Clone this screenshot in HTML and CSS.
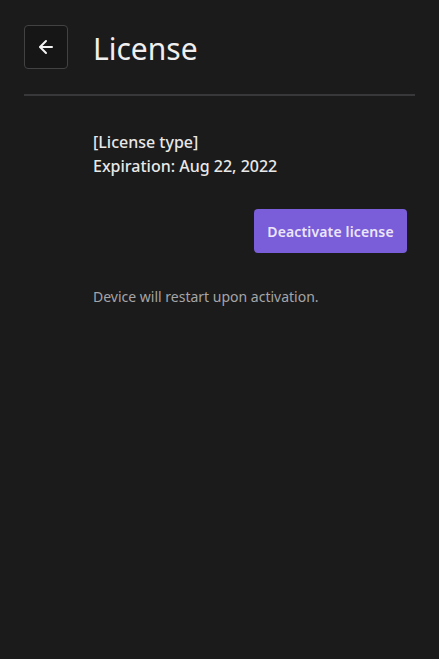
FILE: index.html
```html
<!DOCTYPE html>
<html lang="en">
<head>
<meta charset="utf-8">
<title>License</title>
<link rel="stylesheet" href="styles.css">
</head>
<body>
<div class="page">
  <header class="header">
    <button class="back" aria-label="Back">
      <svg width="18" height="18" viewBox="0 0 18 18" fill="none" stroke="#f2f2f2" stroke-width="2" stroke-linecap="round" stroke-linejoin="round">
        <path d="M15 9H3.5"/>
        <path d="M9 3L3 9L9 15"/>
      </svg>
    </button>
    <h1 class="title">License</h1>
  </header>
  <div class="divider"></div>
  <section class="content">
    <div class="info">
      <div class="info-line">[License type]</div>
      <div class="info-line">Expiration: Aug 22, 2022</div>
    </div>
    <div class="actions">
      <button class="primary">Deactivate license</button>
    </div>
    <p class="note">Device will restart upon activation.</p>
  </section>
</div>
</body>
</html>
```
FILE: styles.css
```css
html, body {
  margin: 0;
  padding: 0;
  background: #1b1b1c;
  height: 100%;
}
body {
  font-family: "Noto Sans", "Open Sans", sans-serif;
  color: #ececec;
}
.page {
  padding: 25px 24px 0 24px;
}
.header {
  display: flex;
  align-items: center;
  gap: 25px;
  height: 44px;
}
.back {
  width: 44px;
  height: 44px;
  box-sizing: border-box;
  border: 1.5px solid #424244;
  border-radius: 4px;
  background: #161617;
  display: flex;
  align-items: center;
  justify-content: center;
  padding: 0;
}
.title {
  margin: 0;
  padding-top: 3px;
  font-size: 30px;
  font-weight: 400;
  color: #efefef;
  line-height: 44px;
}
.divider {
  margin-top: 25px;
  height: 2px;
  background: #38383a;
}
.content {
  padding-left: 69px;
  padding-right: 8px;
  padding-top: 34px;
}
.info-line {
  font-size: 16px;
  font-weight: 500;
  line-height: 24px;
  color: #e8e8e8;
}
.actions {
  display: flex;
  justify-content: flex-end;
  margin-top: 31px;
}
.primary {
  height: 44px;
  width: 153px;
  border: none;
  border-radius: 4px;
  background: #7a5dd8;
  color: #ebe6fa;
  font-family: "Noto Sans", "Open Sans", sans-serif;
  font-size: 14px;
  font-weight: 600;
  letter-spacing: 0.15px;
  padding: 0;
}
.note {
  margin: 34px 0 0 0;
  font-size: 14px;
  line-height: 20px;
  color: #a5a5a7;
}
```
